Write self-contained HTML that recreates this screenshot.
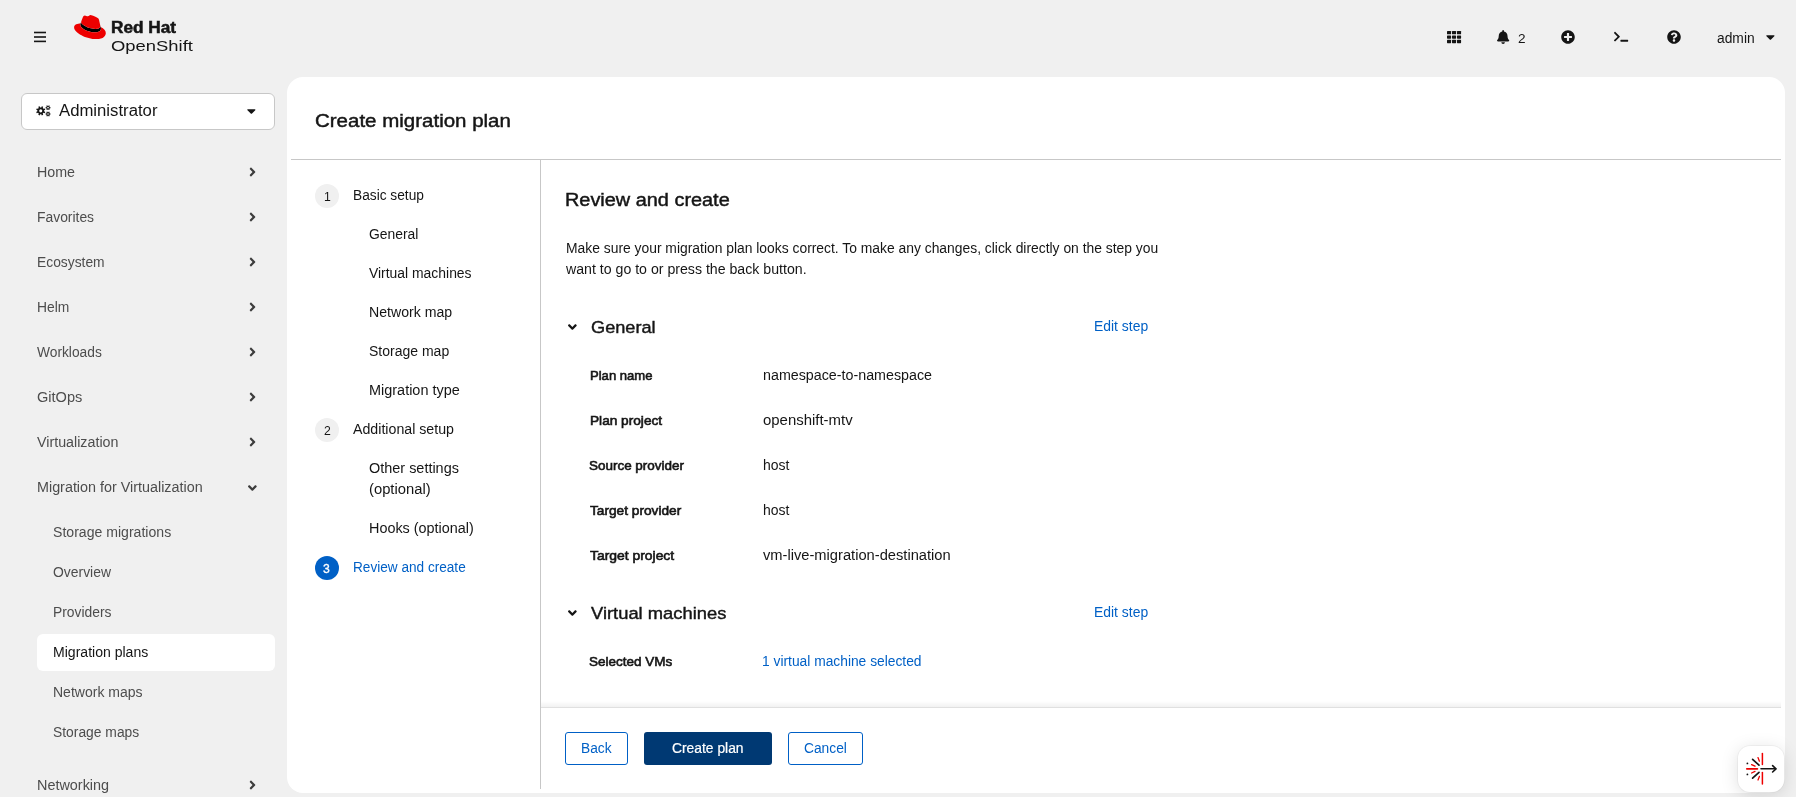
<!DOCTYPE html>
<html lang="en">
<head>
<meta charset="utf-8">
<title>Create migration plan · Red Hat OpenShift</title>
<style>
html,body{margin:0;padding:0;}
body{width:1796px;height:797px;overflow:hidden;background:#f0f0f0;font-family:"Liberation Sans",sans-serif;position:relative;}
.t{position:absolute;transform-origin:0 0;white-space:pre;line-height:20px;font-family:"Liberation Sans",sans-serif;}
.abs{position:absolute;}
#root{position:absolute;left:0;top:0;width:1796px;height:797px;will-change:transform;}
svg{position:absolute;overflow:visible;}
#panel{left:287px;top:77px;width:1498px;height:716px;background:#fff;border-radius:16px;}
#hline{left:291px;top:159px;width:1490px;height:1px;background:#c7c7c7;}
#vline{left:540px;top:160px;width:1px;height:629px;background:#c7c7c7;}
#persp{left:21px;top:93px;width:252px;height:35px;background:#fff;border:1px solid #c7c7c7;border-radius:6px;}
#navsel{left:37px;top:634px;width:238px;height:37px;background:#fff;border-radius:6px;}
.circ{width:24px;height:24px;border-radius:12px;background:#f0f0f0;}
#foot{left:541px;top:707px;width:1240px;height:1px;background:#e0e0e0;}
#footsh{left:541px;top:701px;width:1240px;height:6px;background:linear-gradient(to bottom,rgba(0,0,0,0),rgba(0,0,0,0.055));}
.btn{top:732px;height:31px;border:1px solid #0060c6;border-radius:3px;background:#fff;}
#fab{left:1737.5px;top:745.5px;width:46.5px;height:46px;border-radius:12px;background:#fff;box-shadow:0 3px 18px rgba(0,0,0,0.13),0 0 0 1px rgba(0,0,0,0.04);}
</style>
</head>
<body>
<div id="root">
<!-- masthead -->
<svg id="burger" style="left:34px;top:31px" width="12" height="12" viewBox="0 0 12 12"><rect x="0" y="0.7" width="12" height="1.6" fill="#151515"/><rect x="0" y="5.2" width="12" height="1.6" fill="#151515"/><rect x="0" y="9.6" width="12" height="1.6" fill="#151515"/></svg>
<svg style="left:74px;top:15px" width="32" height="24.2" viewBox="0 0 192 145" ><path d="M160,72.07c1.73,8.19,1.73,9.05,1.73,10.13,0,14-15.74,21.77-36.43,21.77C78.54,104,37.58,76.6,37.58,58.49a18.45,18.45,0,0,1,1.51-7.33l3.66-9.06A6.43,6.43,0,0,0,42.53,44c0,9.22,36.3,39.45,84.94,39.45,12.51,0,30.61-2.58,30.61-17.46a14,14,0,0,0-.31-3.42Z" fill="#000"/><path d="M127.47,83.49c12.51,0,30.61-2.58,30.61-17.46a14,14,0,0,0-.31-3.42l-7.45-32.36c-1.72-7.12-3.23-10.35-15.73-16.6C124.89,8.69,103.76.5,97.51.5,91.69.5,90,8,83.06,8c-6.68,0-11.64-5.6-17.89-5.6-6,0-9.91,4.09-12.93,12.5,0,0-8.41,23.72-9.49,27.16A6.43,6.43,0,0,0,42.53,44c0,9.22,36.3,39.45,84.94,39.45M160,72.07c1.73,8.19,1.73,9.05,1.73,10.13,0,14-15.74,21.77-36.43,21.77C78.54,104,37.58,76.6,37.58,58.49a18.45,18.45,0,0,1,1.51-7.33C22.27,52,.5,55,.5,74.22c0,31.48,74.59,70.28,133.65,70.28,45.28,0,56.7-20.48,56.7-36.65,0-12.72-11-27.16-30.83-35.78" fill="#ee0000"/></svg>
<span class="t" style="left:111.00px;top:17.53px;font-size:15.8px;color:#151515;font-weight:700;transform:scaleX(1.0905);-webkit-text-stroke:0.5px #151515;">Red Hat</span>
<span class="t" style="left:111.00px;top:35.73px;font-size:15.2px;color:#151515;transform:scaleX(1.2124);">OpenShift</span>
<span class="t" style="left:1518.00px;top:29.29px;font-size:13.6px;color:#151515;">2</span>
<span class="t" style="left:1717.00px;top:29.22px;font-size:13.8px;color:#151515;transform:scaleX(1.0018);">admin</span>
<svg style="left:1446.9px;top:30.75px" width="14.1" height="12.2" viewBox="0 0 14.1 12.2" ><rect x="0.00" y="0.00" width="4.1" height="3.3" rx="0.6" fill="#151515"/><rect x="5.00" y="0.00" width="4.1" height="3.3" rx="0.6" fill="#151515"/><rect x="10.00" y="0.00" width="4.1" height="3.3" rx="0.6" fill="#151515"/><rect x="0.00" y="4.43" width="4.1" height="3.3" rx="0.6" fill="#151515"/><rect x="5.00" y="4.43" width="4.1" height="3.3" rx="0.6" fill="#151515"/><rect x="10.00" y="4.43" width="4.1" height="3.3" rx="0.6" fill="#151515"/><rect x="0.00" y="8.86" width="4.1" height="3.3" rx="0.6" fill="#151515"/><rect x="5.00" y="8.86" width="4.1" height="3.3" rx="0.6" fill="#151515"/><rect x="10.00" y="8.86" width="4.1" height="3.3" rx="0.6" fill="#151515"/></svg>
<svg style="left:1497px;top:30px" width="12.25" height="14" viewBox="0 0 448 512" ><path d="M224 512c35.32 0 63.97-28.65 63.97-64H160.03c0 35.35 28.65 64 63.97 64zm215.39-149.71c-19.32-20.76-55.47-51.99-55.47-154.29 0-77.7-54.48-139.9-127.94-155.16V32c0-17.67-14.32-32-31.98-32s-31.98 14.33-31.98 32v20.84C118.56 68.1 64.08 130.3 64.08 208c0 102.3-36.15 133.53-55.47 154.29-6 6.45-8.66 14.16-8.61 21.71.11 16.4 12.98 32 32.1 32h383.8c19.12 0 32-15.6 32.1-32 .05-7.55-2.61-15.27-8.61-21.71z" fill="#151515"/></svg>
<svg style="left:1561px;top:30px" width="14" height="14" viewBox="0 0 512 512" ><path d="M256 8C119 8 8 119 8 256s111 248 248 248 248-111 248-248S393 8 256 8zm144 276c0 6.6-5.4 12-12 12h-92v92c0 6.6-5.4 12-12 12h-56c-6.6 0-12-5.4-12-12v-92h-92c-6.6 0-12-5.4-12-12v-56c0-6.6 5.4-12 12-12h92v-92c0-6.6 5.4-12 12-12h56c6.6 0 12 5.4 12 12v92h92c6.6 0 12 5.4 12 12v56z" fill="#151515"/></svg>
<svg style="left:1613.8px;top:31.4px" width="14.2" height="11.36" viewBox="0 0 640 512" ><path d="M257.981 272.971L63.638 467.314c-9.373 9.373-24.569 9.373-33.941 0L7.029 444.647c-9.357-9.357-9.375-24.522-.04-33.901L161.011 256 6.99 101.255c-9.335-9.379-9.317-24.544.04-33.901l22.667-22.667c9.373-9.373 24.569-9.373 33.941 0L257.981 239.03c9.373 9.372 9.373 24.568 0 33.941zM640 456v-32c0-13.255-10.745-24-24-24H312c-13.255 0-24 10.745-24 24v32c0 13.255 10.745 24 24 24h304c13.255 0 24-10.745 24-24z" fill="#151515"/></svg>
<svg style="left:1667px;top:30px" width="14" height="14" viewBox="0 0 512 512" ><path d="M504 256c0 136.997-111.043 248-248 248S8 392.997 8 256C8 119.083 119.043 8 256 8s248 111.083 248 248zM262.655 90c-54.497 0-89.255 22.957-116.549 63.758-3.536 5.286-2.353 12.415 2.715 16.258l34.699 26.31c5.205 3.947 12.621 3.008 16.665-2.122 17.864-22.658 30.113-35.797 57.303-35.797 20.429 0 45.698 13.148 45.698 32.958 0 14.976-12.363 22.667-32.534 33.976C247.128 238.528 216 254.941 216 296v4c0 6.627 5.373 12 12 12h56c6.627 0 12-5.373 12-12v-1.333c0-28.462 83.186-29.647 83.186-106.667 0-58.002-60.165-102-116.531-102zM256 338c-25.365 0-46 20.635-46 46 0 25.364 20.635 46 46 46s46-20.636 46-46c0-25.365-20.635-46-46-46z" fill="#151515"/></svg>
<svg style="left:1765.7px;top:30px" width="8.75" height="14" viewBox="0 0 320 512" ><path d="M31.3 192h257.3c17.8 0 26.7 21.5 14.1 34.1L174.1 354.8c-7.8 7.8-20.5 7.8-28.3 0L17.2 226.1C4.6 213.5 13.5 192 31.3 192z" fill="#151515"/></svg>

<!-- sidebar -->
<div id="persp" class="abs"></div>
<div id="navsel" class="abs"></div>
<svg style="left:36.0px;top:105.2px" width="14.6" height="11.68" viewBox="0 0 640 512" ><path d="M356.2,279.5 L407.3,303.9 L382.8,363.1 L329.4,344.2 L296.2,377.4 L315.1,430.8 L255.9,455.3 L231.5,404.2 L184.5,404.2 L160.1,455.3 L100.9,430.8 L119.8,377.4 L86.6,344.2 L33.2,363.1 L8.7,303.9 L59.8,279.5 L59.8,232.5 L8.7,208.1 L33.2,148.9 L86.6,167.8 L119.8,134.6 L100.9,81.2 L160.1,56.7 L184.5,107.8 L231.5,107.8 L255.9,56.7 L315.1,81.2 L296.2,134.6 L329.4,167.8 L382.8,148.9 L407.3,208.1 L356.2,232.5Z M276.0,256.0 A68,68 0 1,0 140.0,256.0 A68,68 0 1,0 276.0,256.0Z M604.1,93.3 L637.6,94.7 L637.6,141.3 L604.1,142.7 L587.5,171.5 L602.9,201.2 L562.6,224.5 L544.6,196.3 L511.4,196.3 L493.4,224.5 L453.1,201.2 L468.5,171.5 L451.9,142.7 L418.4,141.3 L418.4,94.7 L451.9,93.3 L468.5,64.5 L453.1,34.8 L493.4,11.5 L511.4,39.7 L544.6,39.7 L562.6,11.5 L602.9,34.8 L587.5,64.5Z M564.0,118.0 A36,36 0 1,0 492.0,118.0 A36,36 0 1,0 564.0,118.0Z M604.1,369.3 L637.6,370.7 L637.6,417.3 L604.1,418.7 L587.5,447.5 L602.9,477.2 L562.6,500.5 L544.6,472.3 L511.4,472.3 L493.4,500.5 L453.1,477.2 L468.5,447.5 L451.9,418.7 L418.4,417.3 L418.4,370.7 L451.9,369.3 L468.5,340.5 L453.1,310.8 L493.4,287.5 L511.4,315.7 L544.6,315.7 L562.6,287.5 L602.9,310.8 L587.5,340.5Z M564.0,394.0 A36,36 0 1,0 492.0,394.0 A36,36 0 1,0 564.0,394.0Z" fill="#151515" fill-rule="evenodd"/></svg>
<svg style="left:247.0px;top:104.2px" width="8.75" height="14" viewBox="0 0 320 512" ><path d="M31.3 192h257.3c17.8 0 26.7 21.5 14.1 34.1L174.1 354.8c-7.8 7.8-20.5 7.8-28.3 0L17.2 226.1C4.6 213.5 13.5 192 31.3 192z" fill="#151515"/></svg>
<svg style="left:248.7px;top:165.2px" width="7" height="14" viewBox="0 0 256 512" ><path d="M224.3 273l-136 136c-9.4 9.4-24.6 9.4-33.9 0l-22.6-22.6c-9.4-9.4-9.4-24.6 0-33.9l96.4-96.4-96.400-96.400c-9.400-9.400-9.400-24.600 0-33.900L54.300 103c9.400-9.400 24.600-9.400 33.900 0l136 136c9.500 9.400 9.500 24.600.1 34z" fill="#3d3d3d"/></svg>
<svg style="left:248.7px;top:210.1px" width="7" height="14" viewBox="0 0 256 512" ><path d="M224.3 273l-136 136c-9.4 9.4-24.6 9.4-33.9 0l-22.6-22.6c-9.4-9.4-9.4-24.6 0-33.9l96.4-96.4-96.400-96.400c-9.400-9.400-9.400-24.600 0-33.900L54.300 103c9.400-9.400 24.600-9.400 33.900 0l136 136c9.500 9.400 9.500 24.600.1 34z" fill="#3d3d3d"/></svg>
<svg style="left:248.7px;top:255.1px" width="7" height="14" viewBox="0 0 256 512" ><path d="M224.3 273l-136 136c-9.4 9.4-24.6 9.4-33.9 0l-22.6-22.6c-9.4-9.4-9.4-24.6 0-33.9l96.4-96.4-96.400-96.400c-9.400-9.400-9.400-24.600 0-33.900L54.300 103c9.400-9.400 24.600-9.400 33.900 0l136 136c9.500 9.400 9.500 24.600.1 34z" fill="#3d3d3d"/></svg>
<svg style="left:248.7px;top:300.1px" width="7" height="14" viewBox="0 0 256 512" ><path d="M224.3 273l-136 136c-9.4 9.4-24.6 9.4-33.9 0l-22.6-22.6c-9.4-9.4-9.4-24.6 0-33.9l96.4-96.4-96.400-96.400c-9.400-9.400-9.400-24.600 0-33.900L54.300 103c9.400-9.400 24.600-9.400 33.900 0l136 136c9.500 9.400 9.500 24.600.1 34z" fill="#3d3d3d"/></svg>
<svg style="left:248.7px;top:345.1px" width="7" height="14" viewBox="0 0 256 512" ><path d="M224.3 273l-136 136c-9.4 9.4-24.6 9.4-33.9 0l-22.6-22.6c-9.4-9.4-9.4-24.6 0-33.9l96.4-96.4-96.400-96.400c-9.400-9.400-9.400-24.600 0-33.900L54.300 103c9.400-9.400 24.600-9.400 33.900 0l136 136c9.500 9.400 9.500 24.600.1 34z" fill="#3d3d3d"/></svg>
<svg style="left:248.7px;top:390.1px" width="7" height="14" viewBox="0 0 256 512" ><path d="M224.3 273l-136 136c-9.4 9.4-24.6 9.4-33.9 0l-22.6-22.6c-9.4-9.4-9.4-24.6 0-33.9l96.4-96.4-96.400-96.400c-9.400-9.400-9.400-24.600 0-33.900L54.300 103c9.400-9.400 24.600-9.400 33.900 0l136 136c9.500 9.400 9.500 24.600.1 34z" fill="#3d3d3d"/></svg>
<svg style="left:248.7px;top:435.1px" width="7" height="14" viewBox="0 0 256 512" ><path d="M224.3 273l-136 136c-9.4 9.4-24.6 9.4-33.9 0l-22.6-22.6c-9.4-9.4-9.4-24.6 0-33.9l96.4-96.4-96.400-96.400c-9.400-9.400-9.400-24.600 0-33.900L54.300 103c9.400-9.400 24.600-9.400 33.900 0l136 136c9.500 9.400 9.500 24.600.1 34z" fill="#3d3d3d"/></svg>
<svg style="left:248.7px;top:778.2px" width="7" height="14" viewBox="0 0 256 512" ><path d="M224.3 273l-136 136c-9.4 9.4-24.6 9.4-33.9 0l-22.6-22.6c-9.4-9.4-9.4-24.6 0-33.9l96.4-96.4-96.400-96.400c-9.400-9.400-9.400-24.600 0-33.900L54.300 103c9.400-9.400 24.600-9.400 33.900 0l136 136c9.500 9.400 9.500 24.600.1 34z" fill="#3d3d3d"/></svg>
<svg style="left:248.2px;top:480.5px" width="8.75" height="14" viewBox="0 0 320 512" ><path d="M143 352.3L7 216.3c-9.4-9.4-9.4-24.6 0-33.9l22.6-22.6c9.4-9.4 24.6-9.4 33.9 0l96.4 96.4 96.4-96.4c9.4-9.4 24.6-9.4 33.900 0l22.600 22.600c9.400 9.400 9.400 24.600 0 33.900l-136 136c-9.200 9.400-24.400 9.400-33.800 0z" fill="#3d3d3d"/></svg>
<span class="t" style="left:59.00px;top:101.46px;font-size:16px;color:#151515;transform:scaleX(1.0446);">Administrator</span>
<span class="t" style="left:37.00px;top:163.22px;font-size:13.8px;color:#4d4d4d;transform:scaleX(1.0335);">Home</span>
<span class="t" style="left:37.00px;top:208.22px;font-size:13.8px;color:#4d4d4d;transform:scaleX(1.0057);">Favorites</span>
<span class="t" style="left:37.00px;top:253.22px;font-size:13.8px;color:#4d4d4d;transform:scaleX(1.0023);">Ecosystem</span>
<span class="t" style="left:37.00px;top:298.22px;font-size:13.8px;color:#4d4d4d;transform:scaleX(1.0029);">Helm</span>
<span class="t" style="left:37.00px;top:343.22px;font-size:13.8px;color:#4d4d4d;transform:scaleX(0.9978);">Workloads</span>
<span class="t" style="left:37.00px;top:388.22px;font-size:13.8px;color:#4d4d4d;transform:scaleX(1.0556);">GitOps</span>
<span class="t" style="left:37.00px;top:433.22px;font-size:13.8px;color:#4d4d4d;transform:scaleX(1.0344);">Virtualization</span>
<span class="t" style="left:37.00px;top:478.22px;font-size:13.8px;color:#4d4d4d;transform:scaleX(1.0401);">Migration for Virtualization</span>
<span class="t" style="left:53.00px;top:523.22px;font-size:13.8px;color:#4d4d4d;transform:scaleX(1.0207);">Storage migrations</span>
<span class="t" style="left:53.00px;top:563.22px;font-size:13.8px;color:#4d4d4d;transform:scaleX(1.0078);">Overview</span>
<span class="t" style="left:53.00px;top:603.22px;font-size:13.8px;color:#4d4d4d;transform:scaleX(1.0042);">Providers</span>
<span class="t" style="left:53.00px;top:643.22px;font-size:13.8px;color:#151515;transform:scaleX(1.0183);">Migration plans</span>
<span class="t" style="left:53.00px;top:683.22px;font-size:13.8px;color:#4d4d4d;transform:scaleX(1.0161);">Network maps</span>
<span class="t" style="left:53.00px;top:723.22px;font-size:13.8px;color:#4d4d4d;transform:scaleX(1.0041);">Storage maps</span>
<span class="t" style="left:37.00px;top:776.22px;font-size:13.8px;color:#4d4d4d;transform:scaleX(1.0449);">Networking</span>

<!-- main panel -->
<div id="panel" class="abs"></div>
<div id="hline" class="abs"></div>
<div id="vline" class="abs"></div>
<span class="t" style="left:315.00px;top:110.66px;font-size:18.3px;color:#151515;transform:scaleX(1.1209);-webkit-text-stroke:0.45px #151515;">Create migration plan</span>

<!-- wizard nav -->
<div class="abs circ" style="left:315px;top:184px"></div>
<div class="abs circ" style="left:315px;top:418px"></div>
<div class="abs circ" style="left:315px;top:556px;background:#0060c6"></div>
<span class="t" style="left:324.00px;top:187.27px;font-size:12.2px;color:#151515;">1</span>
<span class="t" style="left:324.00px;top:421.27px;font-size:12.2px;color:#151515;">2</span>
<span class="t" style="left:323.00px;top:559.27px;font-size:12.2px;color:#ffffff;-webkit-text-stroke:0.3px #ffffff;">3</span>
<span class="t" style="left:353.00px;top:186.22px;font-size:13.8px;color:#151515;transform:scaleX(0.9945);">Basic setup</span>
<span class="t" style="left:369.00px;top:225.22px;font-size:13.8px;color:#151515;transform:scaleX(1.0064);">General</span>
<span class="t" style="left:369.00px;top:264.22px;font-size:13.8px;color:#151515;transform:scaleX(1.008);">Virtual machines</span>
<span class="t" style="left:369.00px;top:303.22px;font-size:13.8px;color:#151515;transform:scaleX(1.0232);">Network map</span>
<span class="t" style="left:369.00px;top:342.22px;font-size:13.8px;color:#151515;transform:scaleX(1.0152);">Storage map</span>
<span class="t" style="left:369.00px;top:381.22px;font-size:13.8px;color:#151515;transform:scaleX(1.0477);">Migration type</span>
<span class="t" style="left:353.00px;top:420.22px;font-size:13.8px;color:#151515;transform:scaleX(1.0284);">Additional setup</span>
<span class="t" style="left:369.00px;top:459.22px;font-size:13.8px;color:#151515;transform:scaleX(1.0468);">Other settings</span>
<span class="t" style="left:369.00px;top:480.22px;font-size:13.8px;color:#151515;transform:scaleX(1.0709);">(optional)</span>
<span class="t" style="left:369.00px;top:519.22px;font-size:13.8px;color:#151515;transform:scaleX(1.0431);">Hooks (optional)</span>
<span class="t" style="left:353.00px;top:558.22px;font-size:13.8px;color:#0060c6;transform:scaleX(0.9863);">Review and create</span>

<!-- wizard body -->
<svg style="left:568.2px;top:319.8px" width="8.75" height="14" viewBox="0 0 320 512" ><path d="M143 352.3L7 216.3c-9.4-9.4-9.4-24.6 0-33.9l22.6-22.6c9.4-9.4 24.6-9.4 33.9 0l96.4 96.4 96.4-96.4c9.4-9.4 24.6-9.4 33.900 0l22.600 22.600c9.400 9.400 9.400 24.600 0 33.900l-136 136c-9.200 9.400-24.400 9.400-33.800 0z" fill="#151515"/></svg>
<svg style="left:568.4px;top:605.6px" width="8.75" height="14" viewBox="0 0 320 512" ><path d="M143 352.3L7 216.3c-9.4-9.4-9.4-24.6 0-33.9l22.6-22.6c9.4-9.4 24.6-9.4 33.9 0l96.4 96.4 96.4-96.4c9.4-9.4 24.6-9.4 33.900 0l22.600 22.600c9.400 9.400 9.400 24.600 0 33.900l-136 136c-9.200 9.400-24.400 9.400-33.800 0z" fill="#151515"/></svg>
<span class="t" style="left:565.00px;top:190.36px;font-size:18.0px;color:#151515;transform:scaleX(1.1048);-webkit-text-stroke:0.45px #151515;">Review and create</span>
<span class="t" style="left:566.00px;top:239.22px;font-size:13.8px;color:#151515;transform:scaleX(1.0046);">Make sure your migration plan looks correct. To make any changes, click directly on the step you</span>
<span class="t" style="left:566.00px;top:260.22px;font-size:13.8px;color:#151515;transform:scaleX(1.025);">want to go to or press the back button.</span>
<span class="t" style="left:591.00px;top:316.97px;font-size:17.4px;color:#151515;transform:scaleX(1.0447);-webkit-text-stroke:0.42px #151515;">General</span>
<span class="t" style="left:1094.00px;top:317.22px;font-size:13.8px;color:#0060c6;transform:scaleX(1.0083);">Edit step</span>
<span class="t" style="left:591.00px;top:602.97px;font-size:17.4px;color:#151515;transform:scaleX(1.0551);-webkit-text-stroke:0.42px #151515;">Virtual machines</span>
<span class="t" style="left:1094.00px;top:603.22px;font-size:13.8px;color:#0060c6;transform:scaleX(1.0083);">Edit step</span>
<span class="t" style="left:590.00px;top:366.43px;font-size:13.2px;color:#151515;transform:scaleX(0.9908);-webkit-text-stroke:0.6px #151515;">Plan name</span>
<span class="t" style="left:590.00px;top:411.43px;font-size:13.2px;color:#151515;transform:scaleX(1.0351);-webkit-text-stroke:0.6px #151515;">Plan project</span>
<span class="t" style="left:589.00px;top:456.43px;font-size:13.2px;color:#151515;transform:scaleX(1.0201);-webkit-text-stroke:0.6px #151515;">Source provider</span>
<span class="t" style="left:590.00px;top:501.43px;font-size:13.2px;color:#151515;transform:scaleX(1.0371);-webkit-text-stroke:0.6px #151515;">Target provider</span>
<span class="t" style="left:590.00px;top:546.43px;font-size:13.2px;color:#151515;transform:scaleX(1.0533);-webkit-text-stroke:0.6px #151515;">Target project</span>
<span class="t" style="left:589.00px;top:652.43px;font-size:13.2px;color:#151515;transform:scaleX(1.0232);-webkit-text-stroke:0.6px #151515;">Selected VMs</span>
<span class="t" style="left:763.00px;top:366.22px;font-size:13.8px;color:#151515;transform:scaleX(1.0347);">namespace-to-namespace</span>
<span class="t" style="left:763.00px;top:411.22px;font-size:13.8px;color:#151515;transform:scaleX(1.0824);">openshift-mtv</span>
<span class="t" style="left:763.00px;top:456.22px;font-size:13.8px;color:#151515;transform:scaleX(1.0137);">host</span>
<span class="t" style="left:763.00px;top:501.22px;font-size:13.8px;color:#151515;transform:scaleX(1.0137);">host</span>
<span class="t" style="left:763.00px;top:546.22px;font-size:13.8px;color:#151515;transform:scaleX(1.064);">vm-live-migration-destination</span>
<span class="t" style="left:762.00px;top:652.22px;font-size:13.8px;color:#0060c6;">1 virtual machine selected</span>

<!-- footer -->
<div id="footsh" class="abs"></div>
<div id="foot" class="abs"></div>
<div class="abs btn" style="left:565px;width:61px"></div>
<div class="abs btn" style="left:644px;width:128px;height:33px;border:none;background:#003973"></div>
<div class="abs btn" style="left:788px;width:73px"></div>
<span class="t" style="left:581.00px;top:739.22px;font-size:13.8px;color:#0060c6;transform:scaleX(0.9952);">Back</span>
<span class="t" style="left:672.00px;top:739.22px;font-size:13.8px;color:#ffffff;transform:scaleX(1.0032);-webkit-text-stroke:0.2px #ffffff;">Create plan</span>
<span class="t" style="left:804.00px;top:739.22px;font-size:13.8px;color:#0060c6;transform:scaleX(0.9991);">Cancel</span>

<div id="fab" class="abs"></div>
<svg style="left:1738px;top:745px" width="46" height="46" viewBox="0 0 46 46" ><line x1="24.4" y1="8.6" x2="24.4" y2="19.6" stroke="#ee0000" stroke-width="1.5" stroke-linecap="round"/><line x1="24.4" y1="27.6" x2="24.4" y2="38.9" stroke="#ee0000" stroke-width="1.5" stroke-linecap="round"/><line x1="23" y1="23.8" x2="37.6" y2="23.8" stroke="#151515" stroke-width="1.6" stroke-linecap="round"/><polyline points="34.6,20.6 38,23.8 34.6,27" fill="none" stroke="#151515" stroke-width="1.6" stroke-linecap="round" stroke-linejoin="round"/><line x1="14.6" y1="14.4" x2="21" y2="20.2" stroke="#151515" stroke-width="1.7" stroke-linecap="round"/><line x1="14.6" y1="33.2" x2="21" y2="27.4" stroke="#151515" stroke-width="1.7" stroke-linecap="round"/><line x1="8.8" y1="23.8" x2="19.4" y2="23.8" stroke="#ee0000" stroke-width="1.7" stroke-linecap="round"/><line x1="20.0" y1="12.6" x2="21.4" y2="16.2" stroke="#ee0000" stroke-width="1.3" stroke-linecap="round"/><line x1="20.0" y1="35.0" x2="21.4" y2="31.4" stroke="#ee0000" stroke-width="1.3" stroke-linecap="round"/><line x1="13.6" y1="19.6" x2="17.0" y2="21.2" stroke="#ee0000" stroke-width="1.3" stroke-linecap="round"/><line x1="13.6" y1="28.0" x2="17.0" y2="26.4" stroke="#ee0000" stroke-width="1.3" stroke-linecap="round"/><circle cx="9.4" cy="18.4" r="0.9" fill="#151515"/><circle cx="9.4" cy="29.4" r="0.9" fill="#151515"/></svg>
</div>
</body>
</html>
